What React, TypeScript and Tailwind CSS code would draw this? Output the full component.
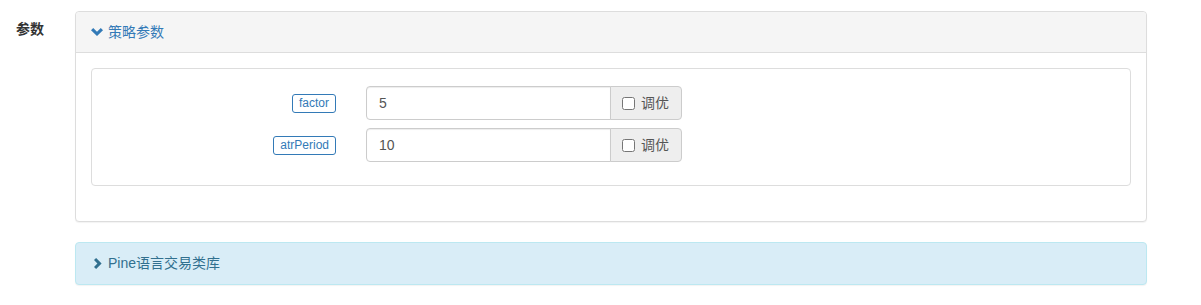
import { useState } from "react";

interface Param {
  name: string;
  value: string;
}

const params: Param[] = [
  { name: "factor", value: "5" },
  { name: "atrPeriod", value: "10" },
];

function ChevronDownIcon() {
  return (
    <svg width="12" height="8" viewBox="0 0 12 8" className="mr-[5px]">
      <polygon points="0,2.2 2.2,0 6,3.8 9.8,0 12,2.2 6,8" fill="#337ab7" />
    </svg>
  );
}

function ChevronRightIcon() {
  return (
    <svg width="8" height="11" viewBox="0 0 8 11" className="ml-[3px] mr-[6px]">
      <polygon points="0,2.1 2.1,0 7.6,5.5 2.1,11 0,8.9 3.4,5.5" fill="#31708f" />
    </svg>
  );
}

export default function App() {
  const [tune, setTune] = useState<boolean[]>([false, false]);

  return (
    <div
      className="min-h-screen bg-white pt-[11px] text-[14px] text-[#333]"
      style={{ fontFamily: '"Liberation Sans", Arial, "Noto Sans CJK SC", sans-serif' }}
    >
      <div className="flex">
        <div className="w-[75px] shrink-0 pl-[16px] pt-[8px]">
          <span className="text-[14px] font-bold leading-[20px]">参数</span>
        </div>
        <div className="w-[1072px]">
          {/* 策略参数 panel */}
          <div className="mb-[20px] rounded-[4px] border border-[#ddd] bg-white shadow-[0_1px_1px_rgba(0,0,0,0.05)]">
            <div className="flex items-center rounded-t-[4px] border-b border-[#ddd] bg-[#f5f5f5] px-[15px] py-[10px] leading-[20px] text-[#337ab7]">
              <ChevronDownIcon />
              <span>策略参数</span>
            </div>
            <div className="px-[15px] pt-[15px] pb-[35px]">
              <div className="rounded-[4px] border border-[#ddd] pt-[17px] pb-[23px]">
                <div className="flex flex-col gap-[8px]">
                  {params.map((p, i) => (
                    <div key={p.name} className="flex items-center">
                      <div className="flex w-[244px] justify-end">
                        <span className="rounded-[3px] border border-[#337ab7] px-[6px] text-[12px] leading-[17px] text-[#337ab7]">
                          {p.name}
                        </span>
                      </div>
                      <div className="ml-[30px] flex h-[34px] w-[316px]">
                        <input
                          defaultValue={p.value}
                          className="h-full w-[245px] rounded-l-[4px] border border-[#ccc] px-[12px] text-[14px] text-[#555] shadow-[inset_0_1px_1px_rgba(0,0,0,0.075)] outline-none"
                        />
                        <label className="-ml-px flex flex-1 items-center rounded-r-[4px] border border-[#ccc] bg-[#eee] pl-[11px] text-[14px] text-[#555]">
                          <input
                            type="checkbox"
                            checked={tune[i]}
                            onChange={() => setTune(tune.map((t, j) => (j === i ? !t : t)))}
                            className="m-0 mr-[6px] h-[13px] w-[13px]"
                          />
                          调优
                        </label>
                      </div>
                    </div>
                  ))}
                </div>
              </div>
            </div>
          </div>
          {/* Pine语言交易类库 panel */}
          <div className="rounded-[4px] border border-[#bce8f1] bg-[#d9edf7] shadow-[0_1px_1px_rgba(0,0,0,0.05)]">
            <div className="flex items-center px-[15px] py-[10px] leading-[21px] text-[#31708f]">
              <ChevronRightIcon />
              <span>Pine语言交易类库</span>
            </div>
          </div>
        </div>
      </div>
    </div>
  );
}
